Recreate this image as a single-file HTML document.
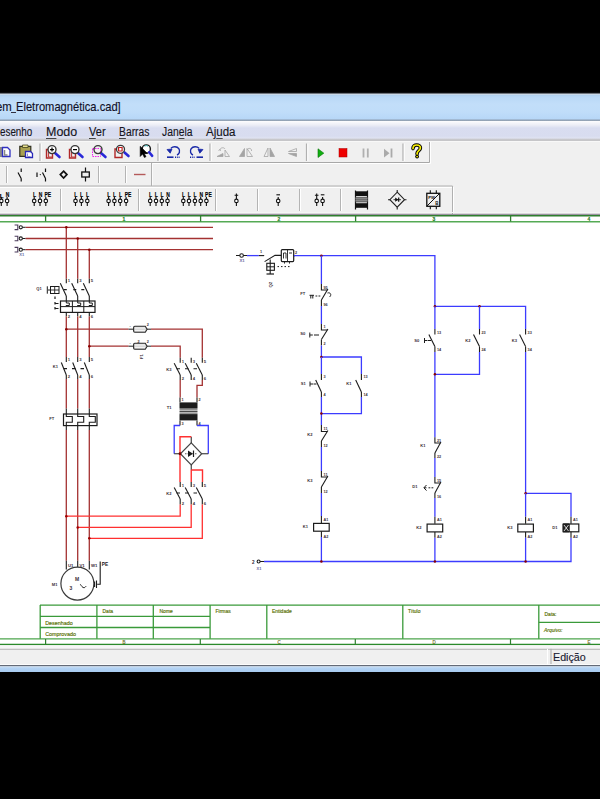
<!DOCTYPE html>
<html><head><meta charset="utf-8">
<style>
*{margin:0;padding:0;box-sizing:border-box}
html,body{width:600px;height:799px;overflow:hidden;background:#000;font-family:"Liberation Sans",sans-serif}
.a{position:absolute}
#title{left:0;top:92px;width:600px;height:29px;background:linear-gradient(#000 0,#1a1c20 1px,#70767e 1.5px,#c8d8e8 2.5px,#b2d2f0 3.5px,#b9d8f6 5px,#c2def9 12px,#c0ddf9 20px,#b7d7f7 27px,#8d9db0 28px,#9aaabb 29px)}
#title span{position:absolute;left:-1px;top:100px;font-size:11.6px;color:#202030;white-space:nowrap}
#menu{left:0;top:121px;width:600px;height:20px;background:linear-gradient(#fdfdfe 0,#f4f5fa 2px,#eceef6 4px,#d9ddf0 7px,#d8dcef 15px,#dfe2f1 17px,#c8c8cc 18.5px,#c6c6c9 19.5px,#f6f6f6 20px)}
.m{position:absolute;top:4px;transform-origin:0 0;display:inline-block;font-size:12px;color:#141420;white-space:nowrap;-webkit-text-stroke:0.12px #141420}
.m u{text-decoration:underline;text-decoration-thickness:1px;text-underline-offset:1.5px;text-decoration-color:#444}
#tb{left:0;top:141px;width:600px;height:73px;background:#f0f0f0}
#canvas{left:0;top:214px;width:600px;height:432px;background:#fff}
#status{left:0;top:646px;width:600px;height:19px;background:#f0f0f0}
#band{left:0;top:666px;width:600px;height:6px;background:linear-gradient(#e8f1fa,#b4d3f3 30%,#a7caf0)}
svg{position:absolute;left:0;top:0}
.t{font-family:"Liberation Sans",sans-serif}
</style></head><body>
<div id="title" class="a"></div>
<div class="a" style="left:-3.7px;top:99.6px;font-size:12.6px;color:#101028;white-space:nowrap;transform:scaleX(0.9);transform-origin:0 0;-webkit-text-stroke:0.15px #101028">em</div><div class="a" style="left:10.8px;top:112px;width:5.2px;height:1.2px;background:#303040"></div><div class="a" style="left:16px;top:99.6px;font-size:12.6px;color:#101028;white-space:nowrap;transform:scaleX(0.885);transform-origin:0 0;-webkit-text-stroke:0.15px #101028">Eletromagnética.cad]</div>
<div id="menu" class="a">
<span class="m" style="left:0px;transform:scaleX(0.82)">esenho</span>
<span class="m" style="left:46px;transform:scaleX(1.04)"><u>M</u>odo</span>
<span class="m" style="left:89px;transform:scaleX(0.92)"><u>V</u>er</span>
<span class="m" style="left:119px;transform:scaleX(0.86)"><u>B</u>arras</span>
<span class="m" style="left:162px;transform:scaleX(0.86)">Jan<u>e</u>la</span>
<span class="m" style="left:206px;transform:scaleX(0.96)">Aj<u>u</u>da</span>
</div>
<div id="tb" class="a"></div>
<div id="canvas" class="a"></div>
<div id="status" class="a"></div>
<div id="band" class="a"></div>
<svg width="600" height="799" viewBox="0 0 600 799">
<!-- toolbar bands -->
<g fill="none" stroke-width="1">
<path d="M0 141.5H600" stroke="#f8f8f8"/>
<path d="M429.5 142V162.5H0" stroke="#a8a8a8"/>
<path d="M430.5 142V163.5H0" stroke="#fff"/>
<path d="M151.5 163V186" stroke="#b0b0b0"/>
<path d="M152.5 163V186" stroke="#fafafa"/>
<path d="M0 186H452.5V214" stroke="#b0b0b0"/>
<path d="M0 187.5H452" stroke="#fff"/>
<path d="M453.5 187V214" stroke="#fff"/>
<path d="M0 212.5H600" stroke="#f6f6f6"/>
<!-- separators -->
<path d="M40 143.5V161M158 143.5V161M210 143.5V161M306.5 143.5V161M403 143.5V161" stroke="#b0b0b0" stroke-width="1.2"/>
<path d="M41.3 143.5V161M159.3 143.5V161M211.3 143.5V161M307.8 143.5V161M404.3 143.5V161" stroke="#fff" stroke-width="0.9"/>
<path d="M6.5 166V183M98.5 166V183M125.5 166V183" stroke="#b4b4b4"/>
<path d="M7.5 166V183M99.5 166V183M126.5 166V183" stroke="#fff"/>
<path d="M60.5 189V211M138.5 189V211M215.5 189V211M257.5 189V211M299.5 189V211M340.5 189V211" stroke="#b4b4b4"/>
<path d="M61.5 189V211M139.5 189V211M216.5 189V211M258.5 189V211M300.5 189V211M341.5 189V211" stroke="#fff"/>
</g>

<!-- toolbar1 icons -->
<g id="tb1">
<path d="M-1 147h3v10h-3z" fill="#8a8a8a"/>
<path d="M2.5 147.5h5l2.5 2.5v6.5h-7.5z" fill="#fff" stroke="#3030c0" stroke-width="1.3"/>
<path d="M4.5 150v5h3" fill="none" stroke="#888" stroke-width="1.5"/>
<path d="M19.8 146.3h11v10h-11z" fill="#a8a050" stroke="#303020" stroke-width="1.2"/>
<path d="M22.5 145h5.5v2.5h-5.5z" fill="#e8e090" stroke="#404020" stroke-width="0.8"/>
<path d="M25.5 151.5h5l2 2v4h-7z" fill="#fff" stroke="#2828b8" stroke-width="1.3"/>
<path d="M27.5 153.5v3h3" fill="none" stroke="#8888cc" stroke-width="1"/>
</g>
<g id="zp">
<path d="M46.5 149.5h6v8.5h-6z" fill="none" stroke="#b02828" stroke-width="1.4"/>
<path d="M48.5 152v5h4" fill="none" stroke="#c04040" stroke-width="1.2"/>
<path d="M55 153l4.5 4" stroke="#2828d8" stroke-width="2.6" stroke-linecap="round"/>
<circle cx="52" cy="149.6" r="4" fill="#fff" stroke="#383838" stroke-width="1.4"/>
<path d="M50 149.6h4M52 147.6v4" stroke="#000" stroke-width="1.2"/>
</g>
<g transform="translate(23 0)">
<path d="M46.5 149.5h6v8.5h-6z" fill="none" stroke="#b02828" stroke-width="1.4"/>
<path d="M48.5 152v5h4" fill="none" stroke="#c04040" stroke-width="1.2"/>
<path d="M55 153l4.5 4" stroke="#2828d8" stroke-width="2.6" stroke-linecap="round"/>
<circle cx="52" cy="149.6" r="4" fill="#fff" stroke="#383838" stroke-width="1.4"/>
<path d="M50 149.6h4" stroke="#000" stroke-width="1.2"/>
</g>
<g>
<path d="M92.5 148.5h8v8h-8z" fill="none" stroke="#f020f0" stroke-width="1" stroke-dasharray="1.5 1"/>
<path d="M101 153l4.5 4" stroke="#2828d8" stroke-width="2.6" stroke-linecap="round"/>
<circle cx="98" cy="149.6" r="4" fill="none" stroke="#383838" stroke-width="1.4"/>
</g>
<g>
<path d="M115 149h7v8.5h-7z" fill="none" stroke="#b02828" stroke-width="1.4"/>
<path d="M124.5 152.5l4 3.5" stroke="#2828d8" stroke-width="2.6" stroke-linecap="round"/>
<circle cx="120.5" cy="149.3" r="4" fill="#fff" stroke="#383838" stroke-width="1.3"/>
<path d="M118.6 147.5h3.5v3.5h-3.5z" fill="none" stroke="#c02020" stroke-width="1.2"/>
</g>
<g>
<circle cx="146.3" cy="149" r="4.1" fill="#fff" stroke="#1a1a1a" stroke-width="1.4"/><path d="M144.5 146.2a3 3 0 0 1 3.5 0" stroke="#40c0c0" stroke-width="1" fill="none"/><path d="M140.2 146.3v10.2l2.4-2.4 1.8 3.4 1.6-0.8-1.8-3.3h3.2z" fill="#000" stroke="#000" stroke-width="0.6"/><path d="M149.2 152.3l3 3.6" stroke="#2828d8" stroke-width="2.5" stroke-linecap="round"/>
</g>
<g fill="none" stroke="#1a2aa8">
<path d="M171 148.2c2-2 6-2 7.8 0.5c1.6 2.5 0.5 5.3-1.8 6.3" stroke-width="1.4"/>
<path d="M167 149.5l5-0.5-1.8 4.2z" fill="#1a2aa8" stroke-width="0.8"/>
<path d="M167 157.2h6.5" stroke-width="1.6"/>
<path d="M175 157.2h5" stroke-width="1.4" stroke-dasharray="1 0.8"/>
<path d="M199 148.2c-2-2-6-2-7.8 0.5c-1.6 2.5-0.5 5.3 1.8 6.3" stroke-width="1.4"/>
<path d="M203 149.5l-5-0.5 1.8 4.2z" fill="#1a2aa8" stroke-width="0.8"/>
<path d="M196.5 157.2h6.5" stroke-width="1.6"/>
<path d="M190 157.2h5" stroke-width="1.4" stroke-dasharray="1 0.8"/>
</g>
<g fill="#a4a4a4" stroke="#a4a4a4" stroke-width="0.8">
<path d="M217 156.5l6-3v3z"/><path d="M225 150v6.5h4.5z" fill="none"/><path d="M220 150c0-2.5 4-3 5-1" fill="none"/><path d="M218.5 150.5l1.5-1 0.5 1.5" fill="none"/>
<path d="M239.5 156.5l5-8v8z"/><path d="M247 148.5v8h5.5z" fill="none"/><path d="M247 150c1-2.5 5-2 4.5 1" fill="none"/>
<path d="M264 156.5l4-8.5v8.5z" fill="none"/><path d="M270 148v8.5l4.5 0z"/>
<path d="M288.5 151.5l8-3v3z" fill="none"/><path d="M288.5 153.5l8 3v-3z"/>
</g>
<path d="M318 148.8v8.7l5.8-4.35z" fill="#10b010" stroke="#087008" stroke-width="0.6"/>
<rect x="339" y="148.5" width="8" height="8.5" fill="#ee0000" stroke="#a00" stroke-width="0.5"/>
<path d="M363.5 148.5v9M367.8 148.5v9" stroke="#b0b0b0" stroke-width="1.8"/>
<path d="M384 148.8v8.7l5.5-4.35z" fill="#aaa"/><path d="M391.5 148.5v9" stroke="#aaa" stroke-width="1.8"/>
<path d="M413 148.6c0-2.4 1.8-3.6 3.7-3.6c2.1 0 3.7 1.3 3.7 3.1c0 2.4-3.3 2.6-3.3 5.2v0.6" fill="none" stroke="#000" stroke-width="3.6" stroke-linecap="round"/><circle cx="417.1" cy="156.6" r="1.9" fill="#000"/><path d="M413 148.6c0-2.4 1.8-3.6 3.7-3.6c2.1 0 3.7 1.3 3.7 3.1c0 2.4-3.3 2.6-3.3 5.2v0.6" fill="none" stroke="#f4ec00" stroke-width="1.7" stroke-linecap="round"/><circle cx="417.1" cy="156.6" r="0.9" fill="#f4ec00"/>
<!-- toolbar2 icons -->
<g fill="none" stroke="#111" stroke-width="1.2">
<path d="M21.2 168.5v3.5M18 172.5l3.2 6M21.2 178.5v3"/>
<path d="M45.5 168.5v3.5M42.5 172.5l3 6M45.5 178.5v3M37 172.5v4.5"/><circle cx="40.3" cy="174.6" r="0.6" fill="#111" stroke="none"/>
<path d="M63.6 171.2l3.3 3.4-3.3 3.4-3.3-3.4z" stroke-width="1.7"/>
<path d="M85.5 167.5v4.5M85.5 177v4.5"/><rect x="81.8" y="172" width="7.5" height="5" stroke-width="1.3"/>
</g>
<path d="M134 174.5h11.5" stroke="#b45a5a" stroke-width="1.4"/>
<!-- toolbar3 icons -->
<g id="tb3"><circle cx="1.3" cy="200.9" r="1.75" fill="#fff" stroke="#111" stroke-width="1.1"/><path d="M1.3 202.7v3.2M1.3 197v2.1" stroke="#111" stroke-width="1.1"/><text x="-0.2" y="197.6" font-size="6" font-weight="bold" fill="#000" stroke="#000" stroke-width="0.25" class="t">L</text><circle cx="7.1" cy="200.9" r="1.75" fill="#fff" stroke="#111" stroke-width="1.1"/><path d="M7.1 202.7v3.2M7.1 197v2.1" stroke="#111" stroke-width="1.1"/><text transform="translate(5.8 197.4) scale(0.78 1)" font-size="6.4" font-weight="bold" fill="#000" stroke="#000" stroke-width="0.15" class="t">N</text><circle cx="34.2" cy="200.9" r="1.75" fill="#fff" stroke="#111" stroke-width="1.1"/><path d="M34.2 202.7v3.2M34.2 197v2.1" stroke="#111" stroke-width="1.1"/><text transform="translate(32.9 197.4) scale(0.78 1)" font-size="6.4" font-weight="bold" fill="#000" stroke="#000" stroke-width="0.15" class="t">L</text><circle cx="40" cy="200.9" r="1.75" fill="#fff" stroke="#111" stroke-width="1.1"/><path d="M40 202.7v3.2M40 197v2.1" stroke="#111" stroke-width="1.1"/><text transform="translate(38.7 197.4) scale(0.78 1)" font-size="6.4" font-weight="bold" fill="#000" stroke="#000" stroke-width="0.15" class="t">N</text><circle cx="45.8" cy="200.9" r="1.75" fill="#fff" stroke="#111" stroke-width="1.1"/><path d="M45.8 202.7v3.2M45.8 197v2.1" stroke="#111" stroke-width="1.1"/><text transform="translate(44.5 197.4) scale(0.78 1)" font-size="6.4" font-weight="bold" fill="#000" stroke="#000" stroke-width="0.15" class="t">PE</text><circle cx="75.5" cy="200.9" r="1.75" fill="#fff" stroke="#111" stroke-width="1.1"/><path d="M75.5 202.7v3.2M75.5 197v2.1" stroke="#111" stroke-width="1.1"/><text transform="translate(74.2 197.4) scale(0.78 1)" font-size="6.4" font-weight="bold" fill="#000" stroke="#000" stroke-width="0.15" class="t">L</text><circle cx="81.4" cy="200.9" r="1.75" fill="#fff" stroke="#111" stroke-width="1.1"/><path d="M81.4 202.7v3.2M81.4 197v2.1" stroke="#111" stroke-width="1.1"/><text transform="translate(80.1 197.4) scale(0.78 1)" font-size="6.4" font-weight="bold" fill="#000" stroke="#000" stroke-width="0.15" class="t">L</text><circle cx="87.3" cy="200.9" r="1.75" fill="#fff" stroke="#111" stroke-width="1.1"/><path d="M87.3 202.7v3.2M87.3 197v2.1" stroke="#111" stroke-width="1.1"/><text transform="translate(86.0 197.4) scale(0.78 1)" font-size="6.4" font-weight="bold" fill="#000" stroke="#000" stroke-width="0.15" class="t">L</text><circle cx="108.6" cy="200.9" r="1.75" fill="#fff" stroke="#111" stroke-width="1.1"/><path d="M108.6 202.7v3.2M108.6 197v2.1" stroke="#111" stroke-width="1.1"/><text transform="translate(107.3 197.4) scale(0.78 1)" font-size="6.4" font-weight="bold" fill="#000" stroke="#000" stroke-width="0.15" class="t">L</text><circle cx="114.4" cy="200.9" r="1.75" fill="#fff" stroke="#111" stroke-width="1.1"/><path d="M114.4 202.7v3.2M114.4 197v2.1" stroke="#111" stroke-width="1.1"/><text transform="translate(113.1 197.4) scale(0.78 1)" font-size="6.4" font-weight="bold" fill="#000" stroke="#000" stroke-width="0.15" class="t">L</text><circle cx="120.2" cy="200.9" r="1.75" fill="#fff" stroke="#111" stroke-width="1.1"/><path d="M120.2 202.7v3.2M120.2 197v2.1" stroke="#111" stroke-width="1.1"/><text transform="translate(118.9 197.4) scale(0.78 1)" font-size="6.4" font-weight="bold" fill="#000" stroke="#000" stroke-width="0.15" class="t">L</text><circle cx="126.1" cy="200.9" r="1.75" fill="#fff" stroke="#111" stroke-width="1.1"/><path d="M126.1 202.7v3.2M126.1 197v2.1" stroke="#111" stroke-width="1.1"/><text transform="translate(124.8 197.4) scale(0.78 1)" font-size="6.4" font-weight="bold" fill="#000" stroke="#000" stroke-width="0.15" class="t">PE</text><circle cx="150.2" cy="200.9" r="1.75" fill="#fff" stroke="#111" stroke-width="1.1"/><path d="M150.2 202.7v3.2M150.2 197v2.1" stroke="#111" stroke-width="1.1"/><text transform="translate(148.9 197.4) scale(0.78 1)" font-size="6.4" font-weight="bold" fill="#000" stroke="#000" stroke-width="0.15" class="t">L</text><circle cx="156" cy="200.9" r="1.75" fill="#fff" stroke="#111" stroke-width="1.1"/><path d="M156 202.7v3.2M156 197v2.1" stroke="#111" stroke-width="1.1"/><text transform="translate(154.7 197.4) scale(0.78 1)" font-size="6.4" font-weight="bold" fill="#000" stroke="#000" stroke-width="0.15" class="t">L</text><circle cx="161.8" cy="200.9" r="1.75" fill="#fff" stroke="#111" stroke-width="1.1"/><path d="M161.8 202.7v3.2M161.8 197v2.1" stroke="#111" stroke-width="1.1"/><text transform="translate(160.5 197.4) scale(0.78 1)" font-size="6.4" font-weight="bold" fill="#000" stroke="#000" stroke-width="0.15" class="t">L</text><circle cx="167.5" cy="200.9" r="1.75" fill="#fff" stroke="#111" stroke-width="1.1"/><path d="M167.5 202.7v3.2M167.5 197v2.1" stroke="#111" stroke-width="1.1"/><text transform="translate(166.2 197.4) scale(0.78 1)" font-size="6.4" font-weight="bold" fill="#000" stroke="#000" stroke-width="0.15" class="t">N</text><circle cx="183.3" cy="200.9" r="1.75" fill="#fff" stroke="#111" stroke-width="1.1"/><path d="M183.3 202.7v3.2M183.3 197v2.1" stroke="#111" stroke-width="1.1"/><text transform="translate(182.0 197.4) scale(0.78 1)" font-size="6.4" font-weight="bold" fill="#000" stroke="#000" stroke-width="0.15" class="t">L</text><circle cx="189" cy="200.9" r="1.75" fill="#fff" stroke="#111" stroke-width="1.1"/><path d="M189 202.7v3.2M189 197v2.1" stroke="#111" stroke-width="1.1"/><text transform="translate(187.7 197.4) scale(0.78 1)" font-size="6.4" font-weight="bold" fill="#000" stroke="#000" stroke-width="0.15" class="t">L</text><circle cx="194.9" cy="200.9" r="1.75" fill="#fff" stroke="#111" stroke-width="1.1"/><path d="M194.9 202.7v3.2M194.9 197v2.1" stroke="#111" stroke-width="1.1"/><text transform="translate(193.6 197.4) scale(0.78 1)" font-size="6.4" font-weight="bold" fill="#000" stroke="#000" stroke-width="0.15" class="t">L</text><circle cx="200.7" cy="200.9" r="1.75" fill="#fff" stroke="#111" stroke-width="1.1"/><path d="M200.7 202.7v3.2M200.7 197v2.1" stroke="#111" stroke-width="1.1"/><text transform="translate(199.4 197.4) scale(0.78 1)" font-size="6.4" font-weight="bold" fill="#000" stroke="#000" stroke-width="0.15" class="t">N</text><circle cx="206.4" cy="200.9" r="1.75" fill="#fff" stroke="#111" stroke-width="1.1"/><path d="M206.4 202.7v3.2M206.4 197v2.1" stroke="#111" stroke-width="1.1"/><text transform="translate(205.1 197.4) scale(0.78 1)" font-size="6.4" font-weight="bold" fill="#000" stroke="#000" stroke-width="0.15" class="t">PE</text><circle cx="236.4" cy="200.9" r="1.75" fill="#fff" stroke="#111" stroke-width="1.1"/><path d="M236.4 202.7v3.2M236.4 197v2.1" stroke="#111" stroke-width="1.1"/><path d="M234.6 195.2h3.6M236.4 193.4v3.6" stroke="#111" stroke-width="1.1"/><circle cx="278.2" cy="200.9" r="1.75" fill="#fff" stroke="#111" stroke-width="1.1"/><path d="M278.2 202.7v3.2M278.2 197v2.1" stroke="#111" stroke-width="1.1"/><path d="M276.4 194.8h3.6" stroke="#111" stroke-width="1.1"/><circle cx="316.7" cy="200.9" r="1.75" fill="#fff" stroke="#111" stroke-width="1.1"/><path d="M316.7 202.7v3.2M316.7 197v2.1" stroke="#111" stroke-width="1.1"/><path d="M314.9 195.2h3.6M316.7 193.4v3.6" stroke="#111" stroke-width="1.1"/><circle cx="322.6" cy="200.9" r="1.75" fill="#fff" stroke="#111" stroke-width="1.1"/><path d="M322.6 202.7v3.2M322.6 197v2.1" stroke="#111" stroke-width="1.1"/><path d="M320.8 194.8h3.6" stroke="#111" stroke-width="1.1"/><g stroke="#111" fill="none"><path d="M355.5 190.5v19M367.5 190.5v19" stroke-width="1.2"/></g><rect x="355.5" y="191.3" width="12" height="4.7" fill="#111"/><rect x="355.5" y="196.8" width="12" height="5.6" fill="#6a6a6a"/><path d="M355.5 198.6h12M355.5 200.6h12" stroke="#9a9a9a" stroke-width="0.7"/><rect x="355.5" y="203.2" width="12" height="4.6" fill="#111"/><g fill="none" stroke="#222" stroke-width="1.1"><path d="M397.2 192.2l7.3 7.5-7.3 7.5-7.3-7.5z"/><path d="M388 199.7h2M404.5 199.7h2M397.2 190v2.2M397.2 207.2v2.2"/></g><path d="M393.5 199.7h7.5" stroke="#111" stroke-width="0.8"/><path d="M395.2 197.6v4.2l3.2-2.1z" fill="#111"/><path d="M398.7 197.6v4.2" stroke="#111" stroke-width="1.2"/><g fill="none" stroke="#111" stroke-width="1.3"><rect x="426.8" y="193.3" width="13" height="13"/><path d="M427 206l12.6-12.6" stroke-width="1"/><path d="M430.3 190.3v3M436.3 190.3v3M430.3 206.3v3M436.3 206.3v3" stroke-width="1.1"/></g><text x="428.3" y="198.6" font-size="4.2" font-weight="bold" fill="#111" class="t">PW</text><text x="435.3" y="205" font-size="4.5" font-weight="bold" fill="#111" class="t">B</text></g>
<g id="frame">
<rect x="0" y="213.8" width="600" height="1" fill="#807888"/>
<path d="M0 215.8H600" fill="none" stroke="#2f7f2f" stroke-width="1.5"/>
<path d="M0 221.7H600" fill="none" stroke="#55aa55" stroke-width="1.5"/>
<path d="M45.6 216V221.5" fill="none" stroke="#2f7f2f" stroke-width="1.3"/>
<path d="M200.6 216V221.5" fill="none" stroke="#2f7f2f" stroke-width="1.3"/>
<path d="M355.6 216V221.5" fill="none" stroke="#2f7f2f" stroke-width="1.3"/>
<path d="M510.6 216V221.5" fill="none" stroke="#2f7f2f" stroke-width="1.3"/>
<text x="122.6" y="220.6" font-size="5" fill="#2a7a20" stroke="#2a7a20" stroke-width="0.15" class="t" font-weight="bold">1</text>
<text x="277.6" y="220.6" font-size="5" fill="#2a7a20" stroke="#2a7a20" stroke-width="0.15" class="t" font-weight="bold">2</text>
<text x="432.6" y="220.6" font-size="5" fill="#2a7a20" stroke="#2a7a20" stroke-width="0.15" class="t" font-weight="bold">3</text>
<text x="587.6" y="220.6" font-size="5" fill="#2a7a20" stroke="#2a7a20" stroke-width="0.15" class="t" font-weight="bold">4</text>
<path d="M40.2 605V639" fill="none" stroke="#3a9a3a" stroke-width="1.3"/>
<path d="M96.9 605V639" fill="none" stroke="#3a9a3a" stroke-width="1.3"/>
<path d="M153.3 605V639" fill="none" stroke="#3a9a3a" stroke-width="1.3"/>
<path d="M210.1 605V639" fill="none" stroke="#3a9a3a" stroke-width="1.3"/>
<path d="M266.8 605V639" fill="none" stroke="#3a9a3a" stroke-width="1.3"/>
<path d="M402.8 605V639" fill="none" stroke="#3a9a3a" stroke-width="1.3"/>
<path d="M538.8 605V639" fill="none" stroke="#3a9a3a" stroke-width="1.3"/>
<path d="M40 605.1H600" fill="none" stroke="#3a9a3a" stroke-width="1.3"/>
<path d="M40 616.3H210" fill="none" stroke="#3a9a3a" stroke-width="1.3"/>
<path d="M40 627.5H210" fill="none" stroke="#3a9a3a" stroke-width="1.3"/>
<path d="M538.8 622.4H600" fill="none" stroke="#3a9a3a" stroke-width="1.3"/>
<path d="M0 638.9H600" fill="none" stroke="#4da54d" stroke-width="1.4"/>
<path d="M0 644.5H600" fill="none" stroke="#2b8a2b" stroke-width="1.4"/>
<path d="M45.6 639V644.5" fill="none" stroke="#2f7f2f" stroke-width="1.2"/>
<path d="M200.3 639V644.5" fill="none" stroke="#2f7f2f" stroke-width="1.2"/>
<path d="M355.3 639V644.5" fill="none" stroke="#2f7f2f" stroke-width="1.2"/>
<path d="M510.5 639V644.5" fill="none" stroke="#2f7f2f" stroke-width="1.2"/>
<text x="122.5" y="643.5" font-size="4.5" fill="#707020" stroke="#707020" stroke-width="0.15" class="t" >B</text>
<text x="277.5" y="643.5" font-size="4.5" fill="#707020" stroke="#707020" stroke-width="0.15" class="t" >C</text>
<text x="432.5" y="643.5" font-size="4.5" fill="#707020" stroke="#707020" stroke-width="0.15" class="t" >D</text>
<text x="587.5" y="643.5" font-size="4.5" fill="#707020" stroke="#707020" stroke-width="0.15" class="t" >E</text>
<text x="102.5" y="613" font-size="5" fill="#587000" stroke="#587000" stroke-width="0.15" class="t" >Data</text>
<text x="159.5" y="613" font-size="5" fill="#587000" stroke="#587000" stroke-width="0.15" class="t" >Nome</text>
<text x="215.5" y="612.5" font-size="5" fill="#587000" stroke="#587000" stroke-width="0.15" class="t" >Firmas</text>
<text x="272" y="612.5" font-size="5" fill="#587000" stroke="#587000" stroke-width="0.15" class="t" >Entidade</text>
<text x="408" y="612.5" font-size="5" fill="#587000" stroke="#587000" stroke-width="0.15" class="t" >Título</text>
<text x="544.5" y="615.5" font-size="5" fill="#587000" stroke="#587000" stroke-width="0.15" class="t" >Data:</text>
<text x="544" y="632" font-size="5" fill="#587000" stroke="#587000" stroke-width="0.15" class="t" font-style="italic">Arquivo:</text>
<text x="45.2" y="624.5" font-size="5.4" fill="#587000" stroke="#587000" stroke-width="0.15" class="t" >Desenhado</text>
<text x="45.2" y="636" font-size="5.4" fill="#587000" stroke="#587000" stroke-width="0.15" class="t" >Comprovado</text>
<rect x="0" y="645.2" width="600" height="3.5" fill="#f6f6f6"/>
<rect x="0" y="648.8" width="600" height="1" fill="#a9a9a9"/>
<rect x="0" y="649.8" width="600" height="14.4" fill="#f0f0f0"/>
<rect x="547" y="648.8" width="1" height="15.5" fill="#fff"/>
<rect x="550.5" y="648.8" width="1" height="15.5" fill="#a9a9a9"/>
<rect x="0" y="664.2" width="600" height="1" fill="#ffffff"/>
<rect x="0" y="665.2" width="600" height="1" fill="#6f7888"/>

</g>
<g id="schem">
<path d="M25.5 227.3 L213 227.3" fill="none" stroke="#a43232" stroke-width="1.3"/>
<circle cx="20.8" cy="227.3" r="1.6" fill="#fff" stroke="#1c1c1c" stroke-width="1.1"/>
<path d="M22.6 227.3 L25.5 227.3" fill="none" stroke="#1c1c1c" stroke-width="1"/>
<path d="M14.6 225.0h3.2v4.6h-3.2" fill="none" stroke="#4a3a5a" stroke-width="1.1"/>
<path d="M25.5 238.5 L213 238.5" fill="none" stroke="#a43232" stroke-width="1.3"/>
<circle cx="20.8" cy="238.5" r="1.6" fill="#fff" stroke="#1c1c1c" stroke-width="1.1"/>
<path d="M22.6 238.5 L25.5 238.5" fill="none" stroke="#1c1c1c" stroke-width="1"/>
<path d="M14.6 236.2h3.2v4.6h-3.2" fill="none" stroke="#4a3a5a" stroke-width="1.1"/>
<path d="M25.5 249.7 L213 249.7" fill="none" stroke="#a43232" stroke-width="1.3"/>
<circle cx="20.8" cy="249.7" r="1.6" fill="#fff" stroke="#1c1c1c" stroke-width="1.1"/>
<path d="M22.6 249.7 L25.5 249.7" fill="none" stroke="#1c1c1c" stroke-width="1"/>
<path d="M14.6 247.39999999999998h3.2v4.6h-3.2" fill="none" stroke="#4a3a5a" stroke-width="1.1"/>
<text x="19.3" y="256.4" font-size="4.1" fill="#6a6aa0" font-weight="bold" text-anchor="start" class="t" >X1</text>
<path d="M66.3 227.3 L66.3 278.7" fill="none" stroke="#a43232" stroke-width="1.3"/>
<circle cx="66.3" cy="227.3" r="1.25" fill="#8a0000"/>
<path d="M77.7 238.5 L77.7 278.7" fill="none" stroke="#a43232" stroke-width="1.3"/>
<circle cx="77.7" cy="238.5" r="1.25" fill="#8a0000"/>
<path d="M89.3 249.7 L89.3 278.7" fill="none" stroke="#a43232" stroke-width="1.3"/>
<circle cx="89.3" cy="249.7" r="1.25" fill="#8a0000"/>
<path d="M66.3 278.7 L66.3 283.3" fill="none" stroke="#1c1c1c" stroke-width="1.1"/>
<path d="M60.3 283.3 L66.3 296" fill="none" stroke="#1c1c1c" stroke-width="1.1"/>
<path d="M66.3 296 L66.3 301" fill="none" stroke="#1c1c1c" stroke-width="1.1"/>
<text x="67.8" y="282" font-size="4.2" fill="#3c3038" font-weight="bold" text-anchor="start" class="t" >1</text>
<path d="M66.3 312.4 L66.3 316.5" fill="none" stroke="#1c1c1c" stroke-width="1.1"/>
<text x="67.8" y="317.5" font-size="4.2" fill="#3c3038" font-weight="bold" text-anchor="start" class="t" >2</text>
<path d="M77.7 278.7 L77.7 283.3" fill="none" stroke="#1c1c1c" stroke-width="1.1"/>
<path d="M71.7 283.3 L77.7 296" fill="none" stroke="#1c1c1c" stroke-width="1.1"/>
<path d="M77.7 296 L77.7 301" fill="none" stroke="#1c1c1c" stroke-width="1.1"/>
<text x="79.2" y="282" font-size="4.2" fill="#3c3038" font-weight="bold" text-anchor="start" class="t" >3</text>
<path d="M77.7 312.4 L77.7 316.5" fill="none" stroke="#1c1c1c" stroke-width="1.1"/>
<text x="79.2" y="317.5" font-size="4.2" fill="#3c3038" font-weight="bold" text-anchor="start" class="t" >4</text>
<path d="M89.3 278.7 L89.3 283.3" fill="none" stroke="#1c1c1c" stroke-width="1.1"/>
<path d="M83.3 283.3 L89.3 296" fill="none" stroke="#1c1c1c" stroke-width="1.1"/>
<path d="M89.3 296 L89.3 301" fill="none" stroke="#1c1c1c" stroke-width="1.1"/>
<text x="90.8" y="282" font-size="4.2" fill="#3c3038" font-weight="bold" text-anchor="start" class="t" >5</text>
<path d="M89.3 312.4 L89.3 316.5" fill="none" stroke="#1c1c1c" stroke-width="1.1"/>
<text x="90.8" y="317.5" font-size="4.2" fill="#3c3038" font-weight="bold" text-anchor="start" class="t" >6</text>
<rect x="60.5" y="301" width="34.5" height="11.4" fill="none" stroke="#1c1c1c" stroke-width="1.2"/>
<path d="M72.4 301 L72.4 312.4" fill="none" stroke="#1c1c1c" stroke-width="1"/>
<path d="M83.8 301 L83.8 312.4" fill="none" stroke="#1c1c1c" stroke-width="1"/>
<path d="M60.5 306.6 L95 306.6" fill="none" stroke="#1c1c1c" stroke-width="1"/>
<path d="M66.3 301V303H69.3V305.5H65.8" fill="none" stroke="#1c1c1c" stroke-width="1"/>
<path d="M77.7 301V303H80.7V305.5H77.2" fill="none" stroke="#1c1c1c" stroke-width="1"/>
<path d="M89.3 301V303H92.3V305.5H88.8" fill="none" stroke="#1c1c1c" stroke-width="1"/>
<path d="M47.3 286.3v7.4M48 290h2.5" fill="none" stroke="#1c1c1c" stroke-width="1"/>
<rect x="50.5" y="286.5" width="8.5" height="7" fill="none" stroke="#1c1c1c" stroke-width="1"/>
<path d="M54.7 286.5v7M50.5 290h8.5" fill="none" stroke="#1c1c1c" stroke-width="0.9"/>
<path d="M55 296.5v2.5M55 302v2.5M55 307v2.5M55.5 303.5h3M55.5 308.5h3" fill="none" stroke="#1c1c1c" stroke-width="1.2"/>
<text x="36.3" y="289.9" font-size="4.1" fill="#3c3038" font-weight="bold" text-anchor="start" class="t" >Q1</text>
<path d="M63.8 289.6H85" fill="none" stroke="#1c1c1c" stroke-width="1.1" stroke-dasharray="3 6.5 3 5"/>
<path d="M66.3 316.5 L66.3 357" fill="none" stroke="#a43232" stroke-width="1.3"/>
<path d="M77.7 316.5 L77.7 357" fill="none" stroke="#a43232" stroke-width="1.3"/>
<path d="M89.3 316.5 L89.3 357" fill="none" stroke="#a43232" stroke-width="1.3"/>
<path d="M66.3 357 L66.3 362" fill="none" stroke="#1c1c1c" stroke-width="1.1"/>
<path d="M61.3 362.5 L66.3 375" fill="none" stroke="#1c1c1c" stroke-width="1.1"/>
<path d="M66.3 375 L66.3 379" fill="none" stroke="#1c1c1c" stroke-width="1.1"/>
<text x="67.8" y="361" font-size="4.2" fill="#3c3038" font-weight="bold" text-anchor="start" class="t" >1</text>
<text x="67.8" y="378" font-size="4.2" fill="#3c3038" font-weight="bold" text-anchor="start" class="t" >2</text>
<path d="M77.7 357 L77.7 362" fill="none" stroke="#1c1c1c" stroke-width="1.1"/>
<path d="M72.7 362.5 L77.7 375" fill="none" stroke="#1c1c1c" stroke-width="1.1"/>
<path d="M77.7 375 L77.7 379" fill="none" stroke="#1c1c1c" stroke-width="1.1"/>
<text x="79.2" y="361" font-size="4.2" fill="#3c3038" font-weight="bold" text-anchor="start" class="t" >3</text>
<text x="79.2" y="378" font-size="4.2" fill="#3c3038" font-weight="bold" text-anchor="start" class="t" >4</text>
<path d="M89.3 357 L89.3 362" fill="none" stroke="#1c1c1c" stroke-width="1.1"/>
<path d="M84.3 362.5 L89.3 375" fill="none" stroke="#1c1c1c" stroke-width="1.1"/>
<path d="M89.3 375 L89.3 379" fill="none" stroke="#1c1c1c" stroke-width="1.1"/>
<text x="90.8" y="361" font-size="4.2" fill="#3c3038" font-weight="bold" text-anchor="start" class="t" >5</text>
<text x="90.8" y="378" font-size="4.2" fill="#3c3038" font-weight="bold" text-anchor="start" class="t" >6</text>
<text x="52.8" y="368.4" font-size="4.1" fill="#3c3038" font-weight="bold" text-anchor="start" class="t" >K1</text>
<path d="M63.5 368.6H85.5" fill="none" stroke="#1c1c1c" stroke-width="1.1" stroke-dasharray="3.5 5 3.5 5"/>
<path d="M66.3 379 L66.3 408.5" fill="none" stroke="#a43232" stroke-width="1.3"/>
<path d="M77.7 379 L77.7 408.5" fill="none" stroke="#a43232" stroke-width="1.3"/>
<path d="M89.3 379 L89.3 408.5" fill="none" stroke="#a43232" stroke-width="1.3"/>
<path d="M66.3 408.5 L66.3 414" fill="none" stroke="#1c1c1c" stroke-width="1.1"/>
<path d="M66.3 425.6 L66.3 430" fill="none" stroke="#1c1c1c" stroke-width="1.1"/>
<path d="M66.3 414V416.5H72.3V422.2H66.3V425.6" fill="none" stroke="#1c1c1c" stroke-width="1.1"/>
<path d="M77.7 408.5 L77.7 414" fill="none" stroke="#1c1c1c" stroke-width="1.1"/>
<path d="M77.7 425.6 L77.7 430" fill="none" stroke="#1c1c1c" stroke-width="1.1"/>
<path d="M77.7 414V416.5H83.7V422.2H77.7V425.6" fill="none" stroke="#1c1c1c" stroke-width="1.1"/>
<path d="M89.3 408.5 L89.3 414" fill="none" stroke="#1c1c1c" stroke-width="1.1"/>
<path d="M89.3 425.6 L89.3 430" fill="none" stroke="#1c1c1c" stroke-width="1.1"/>
<path d="M89.3 414V416.5H95.3V422.2H89.3V425.6" fill="none" stroke="#1c1c1c" stroke-width="1.1"/>
<rect x="63.5" y="414" width="33.5" height="11.6" fill="none" stroke="#1c1c1c" stroke-width="1.2"/>
<text x="49.3" y="419.9" font-size="4.1" fill="#3c3038" font-weight="bold" text-anchor="start" class="t" >FT</text>
<path d="M66.3 430 L66.3 560.8" fill="none" stroke="#a43232" stroke-width="1.3"/>
<path d="M77.7 430 L77.7 560.8" fill="none" stroke="#a43232" stroke-width="1.3"/>
<path d="M89.3 430 L89.3 560.8" fill="none" stroke="#a43232" stroke-width="1.3"/>
<path d="M66.3 560.8 L66.3 569.6" fill="none" stroke="#1c1c1c" stroke-width="1.1"/>
<path d="M77.7 560.8 L77.7 567" fill="none" stroke="#1c1c1c" stroke-width="1.1"/>
<path d="M89.3 560.8 L89.3 569.6" fill="none" stroke="#1c1c1c" stroke-width="1.1"/>
<circle cx="77.4" cy="583.6" r="16.5" fill="none" stroke="#3a3a3a" stroke-width="1.2"/>
<path d="M100.2 561.4v22.8h-3M96.5 580.5v7.5M94.6 581.5v5.5" fill="none" stroke="#1c1c1c" stroke-width="1.1"/>
<text x="68" y="567" font-size="4.3" fill="#3c3038" font-weight="bold" text-anchor="start" class="t" >U1</text>
<text x="79.5" y="567" font-size="4.3" fill="#3c3038" font-weight="bold" text-anchor="start" class="t" >V1</text>
<text x="91" y="567" font-size="4.3" fill="#3c3038" font-weight="bold" text-anchor="start" class="t" >W1</text>
<text x="101.8" y="565.5" font-size="4.8" fill="#222" font-weight="bold" text-anchor="start" class="t" font-weight="bold">PE</text>
<text x="51.8" y="585.9" font-size="4.1" fill="#3c3038" font-weight="bold" text-anchor="start" class="t" >M1</text>
<text x="75" y="580.5" font-size="5" fill="#3c3038" font-weight="bold" text-anchor="start" class="t" >M</text>
<text x="69.5" y="589.5" font-size="5" fill="#3c3038" font-weight="bold" text-anchor="start" class="t" >3</text>
<path d="M80.3 584.3c1.2 1.6 2.2 3.4 3.6 3.4c1 0 1.6-0.8 2.2-1.6" fill="none" stroke="#1c1c1c" stroke-width="1"/>
<path d="M66.3 329.2 L128.5 329.2" fill="none" stroke="#a43232" stroke-width="1.3"/>
<path d="M151 329.2 L202.3 329.2 L202.3 357.8" fill="none" stroke="#a43232" stroke-width="1.3"/>
<path d="M89.3 346.2 L128.5 346.2" fill="none" stroke="#a43232" stroke-width="1.3"/>
<path d="M151 346.2 L180.2 346.2 L180.2 357.8" fill="none" stroke="#a43232" stroke-width="1.3"/>
<circle cx="66.3" cy="329.2" r="1.25" fill="#8a0000"/>
<circle cx="89.3" cy="346.2" r="1.25" fill="#8a0000"/>
<path d="M128.5 329.2 L133.8 329.2" fill="none" stroke="#333" stroke-width="1.1"/>
<path d="M147 329.2 L151 329.2" fill="none" stroke="#333" stroke-width="1.1"/>
<path d="M134.8 326.2h10.5l1.8 3-1.8 3h-10.5a1.2 1.2 0 0 1-1.2-1.2v-3.6a1.2 1.2 0 0 1 1.2-1.2z" fill="#d8d8d8" stroke="#2a2a2a" stroke-width="1.1"/>
<path d="M135 328.0h10M135 330.4h10" stroke="#fff" stroke-width="0.8"/>
<text x="129.5" y="326.59999999999997" font-size="4" fill="#3c3038" font-weight="bold" text-anchor="start" class="t" >-</text>
<text x="146.8" y="326.4" font-size="3.8" fill="#3c3038" font-weight="bold" text-anchor="start" class="t" >2</text>
<path d="M128.5 346.2 L133.8 346.2" fill="none" stroke="#333" stroke-width="1.1"/>
<path d="M147 346.2 L151 346.2" fill="none" stroke="#333" stroke-width="1.1"/>
<path d="M134.8 343.2h10.5l1.8 3-1.8 3h-10.5a1.2 1.2 0 0 1-1.2-1.2v-3.6a1.2 1.2 0 0 1 1.2-1.2z" fill="#d8d8d8" stroke="#2a2a2a" stroke-width="1.1"/>
<path d="M135 345.0h10M135 347.4h10" stroke="#fff" stroke-width="0.8"/>
<text x="129.5" y="343.59999999999997" font-size="4" fill="#3c3038" font-weight="bold" text-anchor="start" class="t" >-</text>
<text x="146.8" y="343.4" font-size="3.8" fill="#3c3038" font-weight="bold" text-anchor="start" class="t" >2</text>
<text x="137.5" y="343.3" font-size="3.8" fill="#3c3038" font-weight="bold" text-anchor="start" class="t" >2</text>
<text x="137" y="359" font-size="4.2" fill="#3c3038" font-weight="bold" text-anchor="start" class="t" transform="rotate(-90 140 356)">F1</text>
<path d="M180.2 357.8 L180.2 362.8" fill="none" stroke="#1c1c1c" stroke-width="1.1"/>
<path d="M174.2 363.3 L180.2 375" fill="none" stroke="#1c1c1c" stroke-width="1.1"/>
<path d="M180.2 375 L180.2 380" fill="none" stroke="#1c1c1c" stroke-width="1.1"/>
<text x="181.7" y="362.5" font-size="4.2" fill="#3c3038" font-weight="bold" text-anchor="start" class="t" >1</text>
<text x="181.7" y="379.5" font-size="4.2" fill="#3c3038" font-weight="bold" text-anchor="start" class="t" >2</text>
<path d="M191.2 357.8 L191.2 362.8" fill="none" stroke="#1c1c1c" stroke-width="1.1"/>
<path d="M185.2 363.3 L191.2 375" fill="none" stroke="#1c1c1c" stroke-width="1.1"/>
<path d="M191.2 375 L191.2 380" fill="none" stroke="#1c1c1c" stroke-width="1.1"/>
<text x="192.7" y="362.5" font-size="4.2" fill="#3c3038" font-weight="bold" text-anchor="start" class="t" >3</text>
<text x="192.7" y="379.5" font-size="4.2" fill="#3c3038" font-weight="bold" text-anchor="start" class="t" >4</text>
<path d="M202.3 357.8 L202.3 362.8" fill="none" stroke="#1c1c1c" stroke-width="1.1"/>
<path d="M196.3 363.3 L202.3 375" fill="none" stroke="#1c1c1c" stroke-width="1.1"/>
<path d="M202.3 375 L202.3 380" fill="none" stroke="#1c1c1c" stroke-width="1.1"/>
<text x="203.8" y="362.5" font-size="4.2" fill="#3c3038" font-weight="bold" text-anchor="start" class="t" >5</text>
<text x="203.8" y="379.5" font-size="4.2" fill="#3c3038" font-weight="bold" text-anchor="start" class="t" >6</text>
<text x="166.3" y="371.4" font-size="4.1" fill="#3c3038" font-weight="bold" text-anchor="start" class="t" >K3</text>
<path d="M176.5 368.8H198.5" fill="none" stroke="#1c1c1c" stroke-width="1.1" stroke-dasharray="3.5 5 3.5 5"/>
<path d="M180.2 380 L180.2 397.5" fill="none" stroke="#a43232" stroke-width="1.3"/>
<path d="M202.3 380 L202.3 385.3 L197 385.3 L197 397.5" fill="none" stroke="#a43232" stroke-width="1.3"/>
<path d="M180 397.5 L180 402.2" fill="none" stroke="#1c1c1c" stroke-width="1.1"/>
<path d="M197 397.5 L197 402.2" fill="none" stroke="#1c1c1c" stroke-width="1.1"/>
<rect x="179.5" y="402.4" width="18" height="6.2" fill="#1c1c1c"/>
<path d="M179.5 409.9h18M179.5 411.5h18M179.5 413.1h18" stroke="#1c1c1c" stroke-width="0.8"/>
<rect x="179.5" y="414.1" width="18" height="6.3" fill="#1c1c1c"/>
<path d="M180 420.4 L180 425.5" fill="none" stroke="#1c1c1c" stroke-width="1.1"/>
<path d="M197 420.4 L197 425.5" fill="none" stroke="#1c1c1c" stroke-width="1.1"/>
<text x="166.8" y="409.4" font-size="4.1" fill="#3c3038" font-weight="bold" text-anchor="start" class="t" >T1</text>
<text x="181.5" y="401" font-size="3.8" fill="#3c3038" font-weight="bold" text-anchor="start" class="t" >1</text>
<text x="198.5" y="401" font-size="3.8" fill="#3c3038" font-weight="bold" text-anchor="start" class="t" >2</text>
<text x="181.5" y="425" font-size="3.8" fill="#3c3038" font-weight="bold" text-anchor="start" class="t" >3</text>
<text x="198.5" y="425" font-size="3.8" fill="#3c3038" font-weight="bold" text-anchor="start" class="t" >4</text>
<path d="M180 425.5 L174.2 425.5 L174.2 453.75" fill="none" stroke="#3c3cff" stroke-width="1.3"/>
<path d="M197 425.5 L208.3 425.5 L208.3 453.75" fill="none" stroke="#3c3cff" stroke-width="1.3"/>
<path d="M174.2 453.75 L180.4 453.75" fill="none" stroke="#333" stroke-width="1.1"/>
<path d="M208.3 453.75 L201.7 453.75" fill="none" stroke="#333" stroke-width="1.1"/>
<path d="M191.25 442.9L201.7 453.75L191.25 465L180.4 453.75Z" fill="none" stroke="#444" stroke-width="1.2"/>
<path d="M185 453.75h12.5" stroke="#333" stroke-width="0.8" stroke-dasharray="1.5 1"/>
<path d="M188 450.5v6.5l5-3.25z" fill="#1c1c1c"/><path d="M193.5 450.5v6.5" stroke="#1c1c1c" stroke-width="1.2"/>
<path d="M191.25 442.9 L191.25 436.7" fill="none" stroke="#333" stroke-width="1.1"/>
<path d="M191.25 465 L191.25 470" fill="none" stroke="#333" stroke-width="1.1"/>
<path d="M191.25 436.7 L180 436.7 L180 482" fill="none" stroke="#ff3030" stroke-width="1.4"/>
<path d="M191.25 470 L202.5 470 L202.5 482" fill="none" stroke="#ff3030" stroke-width="1.4"/>
<path d="M191.25 470 L191.25 482" fill="none" stroke="#ff3030" stroke-width="1.4"/>
<circle cx="180" cy="453.75" r="1.4" fill="#7a0000"/>
<path d="M180.2 482 L180.2 487" fill="none" stroke="#1c1c1c" stroke-width="1.1"/>
<path d="M174.2 487.5 L180.2 499" fill="none" stroke="#1c1c1c" stroke-width="1.1"/>
<path d="M180.2 499 L180.2 504.5" fill="none" stroke="#1c1c1c" stroke-width="1.1"/>
<text x="181.7" y="486.5" font-size="4.2" fill="#3c3038" font-weight="bold" text-anchor="start" class="t" >1</text>
<text x="181.7" y="504.5" font-size="4.2" fill="#3c3038" font-weight="bold" text-anchor="start" class="t" >2</text>
<path d="M191.2 482 L191.2 487" fill="none" stroke="#1c1c1c" stroke-width="1.1"/>
<path d="M185.2 487.5 L191.2 499" fill="none" stroke="#1c1c1c" stroke-width="1.1"/>
<path d="M191.2 499 L191.2 504.5" fill="none" stroke="#1c1c1c" stroke-width="1.1"/>
<text x="192.7" y="486.5" font-size="4.2" fill="#3c3038" font-weight="bold" text-anchor="start" class="t" >3</text>
<text x="192.7" y="504.5" font-size="4.2" fill="#3c3038" font-weight="bold" text-anchor="start" class="t" >4</text>
<path d="M202.3 482 L202.3 487" fill="none" stroke="#1c1c1c" stroke-width="1.1"/>
<path d="M196.3 487.5 L202.3 499" fill="none" stroke="#1c1c1c" stroke-width="1.1"/>
<path d="M202.3 499 L202.3 504.5" fill="none" stroke="#1c1c1c" stroke-width="1.1"/>
<text x="203.8" y="486.5" font-size="4.2" fill="#3c3038" font-weight="bold" text-anchor="start" class="t" >5</text>
<text x="203.8" y="504.5" font-size="4.2" fill="#3c3038" font-weight="bold" text-anchor="start" class="t" >6</text>
<text x="166.3" y="494.9" font-size="4.1" fill="#3c3038" font-weight="bold" text-anchor="start" class="t" >K2</text>
<path d="M176.5 493H198.5" fill="none" stroke="#1c1c1c" stroke-width="1.1" stroke-dasharray="3.5 5 3.5 5"/>
<path d="M180.2 504.5 L180.2 516.2 L66.3 516.2" fill="none" stroke="#ff3030" stroke-width="1.3"/>
<path d="M191.2 504.5 L191.2 527.4 L77.7 527.4" fill="none" stroke="#ff3030" stroke-width="1.3"/>
<path d="M202.3 504.5 L202.3 538.3 L89.3 538.3" fill="none" stroke="#ff3030" stroke-width="1.3"/>
<circle cx="66.3" cy="516.2" r="1.25" fill="#a00000"/>
<circle cx="77.7" cy="527.4" r="1.25" fill="#a00000"/>
<circle cx="89.3" cy="538.3" r="1.25" fill="#a00000"/>
<circle cx="241.6" cy="255.5" r="1.8" fill="#fff" stroke="#1c1c1c" stroke-width="1.1"/>
<path d="M236 255.5 L239.8 255.5" fill="none" stroke="#1c1c1c" stroke-width="1"/>
<path d="M243.4 255.5 L247 255.5" fill="none" stroke="#1c1c1c" stroke-width="1"/>
<text x="239.5" y="262" font-size="4.3" fill="#6a6aa0" font-weight="bold" text-anchor="start" class="t" >X1</text>
<path d="M247 255.6 L258.8 255.6" fill="none" stroke="#3c3cff" stroke-width="1.3"/>
<path d="M258.8 255.6 L264.2 255.6" fill="none" stroke="#1c1c1c" stroke-width="1.1"/>
<text x="260" y="253" font-size="3.8" fill="#3c3038" font-weight="bold" text-anchor="start" class="t" >1</text>
<path d="M264.6 261.6 L275 255.4 L281.3 255.4" fill="none" stroke="#1c1c1c" stroke-width="1.1"/>
<rect x="281.3" y="249.6" width="12.4" height="12" rx="1" fill="none" stroke="#1c1c1c" stroke-width="1.2"/>
<path d="M287.5 249.6v12M283.5 258.5v-5.5h2.5v5.5M289 253h3" fill="none" stroke="#1c1c1c" stroke-width="0.9"/>
<path d="M284.5 261.6v2M289.5 261.6v2" fill="none" stroke="#1c1c1c" stroke-width="0.9"/>
<path d="M293.7 255.6 L295 255.6" fill="none" stroke="#1c1c1c" stroke-width="1.1"/>
<text x="295" y="253.5" font-size="3.8" fill="#3c3038" font-weight="bold" text-anchor="start" class="t" >2</text>
<path d="M270.2 259.5 L270.2 274" fill="none" stroke="#1c1c1c" stroke-width="1.1"/>
<path d="M266.5 274 L274 274" fill="none" stroke="#1c1c1c" stroke-width="1.2"/>
<rect x="266.8" y="263.3" width="7.6" height="7" fill="none" stroke="#1c1c1c" stroke-width="1.1"/>
<path d="M266.8 266.8h7.6" stroke="#1c1c1c" stroke-width="1"/>
<path d="M277.5 266.6h13" fill="none" stroke="#1c1c1c" stroke-width="1" stroke-dasharray="1.5 2"/>
<text x="271.5" y="287.5" font-size="4.3" fill="#3c3038" font-weight="bold" text-anchor="start" class="t" transform="rotate(-90 271.5 287.5)">Q2</text>
<path d="M294 255.7 L434.9 255.7 L434.9 306.3" fill="none" stroke="#3c3cff" stroke-width="1.3"/>
<circle cx="321.4" cy="255.7" r="1.25" fill="#8a0000"/>
<path d="M321.4 255.7 L321.4 284" fill="none" stroke="#3c3cff" stroke-width="1.3"/>
<path d="M321.4 284 L321.4 290 L327.4 290" fill="none" stroke="#1c1c1c" stroke-width="1.1"/>
<path d="M327.9 289 L321.4 300" fill="none" stroke="#1c1c1c" stroke-width="1.1"/>
<path d="M321.4 300 L321.4 306" fill="none" stroke="#1c1c1c" stroke-width="1.1"/>
<path d="M327.5 293c3-1 4.5 2 2 4" fill="none" stroke="#1c1c1c" stroke-width="1"/>
<path d="M309.5 295.3h4.5M310.8 295.3v3.2M312.8 295.3v3.2M315.5 296h1.8M318.5 296h1.8" fill="none" stroke="#1c1c1c" stroke-width="1"/>
<text x="300.3" y="294.9" font-size="4.1" fill="#3c3038" font-weight="bold" text-anchor="start" class="t" >FT</text>
<text x="323.5" y="288.5" font-size="3.8" fill="#3c3038" font-weight="bold" text-anchor="start" class="t" >95</text>
<text x="323.5" y="306" font-size="3.8" fill="#3c3038" font-weight="bold" text-anchor="start" class="t" >96</text>
<path d="M321.4 306 L321.4 324" fill="none" stroke="#3c3cff" stroke-width="1.3"/>
<path d="M321.4 324 L321.4 330 L327.4 330" fill="none" stroke="#1c1c1c" stroke-width="1.1"/>
<path d="M327.9 329 L321.4 339.5" fill="none" stroke="#1c1c1c" stroke-width="1.1"/>
<path d="M321.4 339.5 L321.4 345.5" fill="none" stroke="#1c1c1c" stroke-width="1.1"/>
<path d="M309.8 332.5v5M309.8 335h3M314 335h5" fill="none" stroke="#1c1c1c" stroke-width="1"/>
<text x="300.3" y="334.9" font-size="4.1" fill="#3c3038" font-weight="bold" text-anchor="start" class="t" >S0</text>
<text x="323.5" y="328" font-size="3.8" fill="#3c3038" font-weight="bold" text-anchor="start" class="t" >1</text>
<text x="323.5" y="345" font-size="3.8" fill="#3c3038" font-weight="bold" text-anchor="start" class="t" >2</text>
<path d="M321.4 345.5 L321.4 357" fill="none" stroke="#3c3cff" stroke-width="1.3"/>
<path d="M321.4 357 L361.4 357 L361.4 374" fill="none" stroke="#3c3cff" stroke-width="1.3"/>
<circle cx="321.4" cy="357" r="1.25" fill="#8a0000"/>
<path d="M321.4 357 L321.4 374" fill="none" stroke="#3c3cff" stroke-width="1.3"/>
<path d="M321.4 374 L321.4 380" fill="none" stroke="#1c1c1c" stroke-width="1.1"/>
<path d="M315.7 380 L321.4 392" fill="none" stroke="#1c1c1c" stroke-width="1.1"/>
<path d="M321.4 392 L321.4 397" fill="none" stroke="#1c1c1c" stroke-width="1.1"/>
<path d="M310 381.5v5M310 384h3M313.5 384h3" fill="none" stroke="#1c1c1c" stroke-width="1"/>
<text x="300.8" y="384.9" font-size="4.1" fill="#3c3038" font-weight="bold" text-anchor="start" class="t" >S1</text>
<text x="323.5" y="378" font-size="3.8" fill="#3c3038" font-weight="bold" text-anchor="start" class="t" >3</text>
<text x="323.5" y="396" font-size="3.8" fill="#3c3038" font-weight="bold" text-anchor="start" class="t" >4</text>
<path d="M361.4 374 L361.4 380" fill="none" stroke="#1c1c1c" stroke-width="1.1"/>
<path d="M355.7 380 L361.4 392" fill="none" stroke="#1c1c1c" stroke-width="1.1"/>
<path d="M361.4 392 L361.4 397" fill="none" stroke="#1c1c1c" stroke-width="1.1"/>
<text x="346.3" y="384.9" font-size="4.1" fill="#3c3038" font-weight="bold" text-anchor="start" class="t" >K1</text>
<text x="363.5" y="378" font-size="3.8" fill="#3c3038" font-weight="bold" text-anchor="start" class="t" >13</text>
<text x="363.5" y="396" font-size="3.8" fill="#3c3038" font-weight="bold" text-anchor="start" class="t" >14</text>
<path d="M321.4 397 L321.4 425" fill="none" stroke="#3c3cff" stroke-width="1.3"/>
<path d="M361.4 397 L361.4 413.6 L321.4 413.6" fill="none" stroke="#3c3cff" stroke-width="1.3"/>
<circle cx="321.4" cy="413.6" r="1.25" fill="#8a0000"/>
<path d="M321.4 425 L321.4 431.5 L327.4 431.5" fill="none" stroke="#1c1c1c" stroke-width="1.1"/>
<path d="M327.9 430.5 L321.4 441.0" fill="none" stroke="#1c1c1c" stroke-width="1.1"/>
<path d="M321.4 441.0 L321.4 447.0" fill="none" stroke="#1c1c1c" stroke-width="1.1"/>
<text x="307.3" y="435.9" font-size="4.1" fill="#3c3038" font-weight="bold" text-anchor="start" class="t" >K2</text>
<text x="323.5" y="429.5" font-size="3.8" fill="#3c3038" font-weight="bold" text-anchor="start" class="t" >11</text>
<text x="323.5" y="446.5" font-size="3.8" fill="#3c3038" font-weight="bold" text-anchor="start" class="t" >12</text>
<path d="M321.4 447 L321.4 471" fill="none" stroke="#3c3cff" stroke-width="1.3"/>
<path d="M321.4 471 L321.4 477 L327.4 477" fill="none" stroke="#1c1c1c" stroke-width="1.1"/>
<path d="M327.9 476 L321.4 487" fill="none" stroke="#1c1c1c" stroke-width="1.1"/>
<path d="M321.4 487 L321.4 493" fill="none" stroke="#1c1c1c" stroke-width="1.1"/>
<text x="307.3" y="481.9" font-size="4.1" fill="#3c3038" font-weight="bold" text-anchor="start" class="t" >K3</text>
<text x="323.5" y="475.5" font-size="3.8" fill="#3c3038" font-weight="bold" text-anchor="start" class="t" >11</text>
<text x="323.5" y="492.5" font-size="3.8" fill="#3c3038" font-weight="bold" text-anchor="start" class="t" >12</text>
<path d="M321.4 493 L321.4 516" fill="none" stroke="#3c3cff" stroke-width="1.3"/>
<path d="M321.4 516 L321.4 523" fill="none" stroke="#1c1c1c" stroke-width="1.1"/>
<rect x="313.59999999999997" y="523.4" width="15.6" height="7.8" fill="#fff" stroke="#1c1c1c" stroke-width="1.2"/>
<path d="M321.4 531.2 L321.4 537" fill="none" stroke="#1c1c1c" stroke-width="1.1"/>
<text x="302.8" y="528.4" font-size="4.1" fill="#3c3038" font-weight="bold" text-anchor="start" class="t" >K1</text>
<text x="323.5" y="520.5" font-size="3.8" fill="#3c3038" font-weight="bold" text-anchor="start" class="t" >A1</text>
<text x="323.5" y="537.5" font-size="3.8" fill="#3c3038" font-weight="bold" text-anchor="start" class="t" >A2</text>
<path d="M321.4 537 L321.4 561.5" fill="none" stroke="#3c3cff" stroke-width="1.3"/>
<circle cx="258.6" cy="561.5" r="1.5" fill="#fff" stroke="#1c1c1c" stroke-width="1.1"/>
<path d="M260.1 561.5 L264 561.5" fill="none" stroke="#1c1c1c" stroke-width="1"/>
<text x="252" y="563.5" font-size="4.6" fill="#2a2030" font-weight="bold" text-anchor="start" class="t" >2</text>
<text x="256.5" y="569.5" font-size="4" fill="#6a6aa0" font-weight="bold" text-anchor="start" class="t" >X1</text>
<path d="M264 561.5 L571 561.5 L571 537.7" fill="none" stroke="#3c3cff" stroke-width="1.3"/>
<circle cx="321.4" cy="561.5" r="1.25" fill="#8a0000"/>
<path d="M434.9 306.3 L525.6 306.3 L525.6 329" fill="none" stroke="#3c3cff" stroke-width="1.3"/>
<circle cx="434.9" cy="306.3" r="1.25" fill="#8a0000"/>
<circle cx="479.5" cy="306.3" r="1.25" fill="#8a0000"/>
<path d="M434.9 306.3 L434.9 329" fill="none" stroke="#3c3cff" stroke-width="1.3"/>
<path d="M479.5 306.3 L479.5 329" fill="none" stroke="#3c3cff" stroke-width="1.3"/>
<path d="M434.9 329 L434.9 334.5" fill="none" stroke="#1c1c1c" stroke-width="1.1"/>
<path d="M428.9 334.5 L434.9 346.5" fill="none" stroke="#1c1c1c" stroke-width="1.1"/>
<path d="M434.9 346.5 L434.9 352.0" fill="none" stroke="#1c1c1c" stroke-width="1.1"/>
<text x="436.9" y="334" font-size="3.8" fill="#3c3038" font-weight="bold" text-anchor="start" class="t" >13</text>
<text x="436.9" y="351" font-size="3.8" fill="#3c3038" font-weight="bold" text-anchor="start" class="t" >14</text>
<path d="M479.5 329 L479.5 334.5" fill="none" stroke="#1c1c1c" stroke-width="1.1"/>
<path d="M473.5 334.5 L479.5 346.5" fill="none" stroke="#1c1c1c" stroke-width="1.1"/>
<path d="M479.5 346.5 L479.5 352.0" fill="none" stroke="#1c1c1c" stroke-width="1.1"/>
<text x="481.5" y="334" font-size="3.8" fill="#3c3038" font-weight="bold" text-anchor="start" class="t" >23</text>
<text x="481.5" y="351" font-size="3.8" fill="#3c3038" font-weight="bold" text-anchor="start" class="t" >24</text>
<path d="M525.6 329 L525.6 334.5" fill="none" stroke="#1c1c1c" stroke-width="1.1"/>
<path d="M519.6 334.5 L525.6 346.5" fill="none" stroke="#1c1c1c" stroke-width="1.1"/>
<path d="M525.6 346.5 L525.6 352.0" fill="none" stroke="#1c1c1c" stroke-width="1.1"/>
<text x="527.6" y="334" font-size="3.8" fill="#3c3038" font-weight="bold" text-anchor="start" class="t" >33</text>
<text x="527.6" y="351" font-size="3.8" fill="#3c3038" font-weight="bold" text-anchor="start" class="t" >34</text>
<text x="414.3" y="341.9" font-size="4.1" fill="#3c3038" font-weight="bold" text-anchor="start" class="t" >S0</text>
<path d="M424.5 338v5M424.5 340.5h3M428 340.5h3" fill="none" stroke="#1c1c1c" stroke-width="1"/>
<text x="465.3" y="341.9" font-size="4.1" fill="#3c3038" font-weight="bold" text-anchor="start" class="t" >K2</text>
<text x="511.8" y="341.9" font-size="4.1" fill="#3c3038" font-weight="bold" text-anchor="start" class="t" >K3</text>
<path d="M434.9 352 L434.9 437.3" fill="none" stroke="#3c3cff" stroke-width="1.3"/>
<path d="M479.5 352 L479.5 374.3 L434.9 374.3" fill="none" stroke="#3c3cff" stroke-width="1.3"/>
<circle cx="434.9" cy="374.3" r="1.25" fill="#8a0000"/>
<path d="M525.6 352 L525.6 493.3" fill="none" stroke="#3c3cff" stroke-width="1.3"/>
<path d="M434.9 437.3 L434.9 443.0 L440.4 443.0" fill="none" stroke="#1c1c1c" stroke-width="1.1"/>
<path d="M440.9 442.0 L434.9 453.0" fill="none" stroke="#1c1c1c" stroke-width="1.1"/>
<path d="M434.9 453.0 L434.9 458.0" fill="none" stroke="#1c1c1c" stroke-width="1.1"/>
<text x="420.3" y="447.4" font-size="4.1" fill="#3c3038" font-weight="bold" text-anchor="start" class="t" >K1</text>
<text x="437" y="441.5" font-size="3.8" fill="#3c3038" font-weight="bold" text-anchor="start" class="t" >21</text>
<text x="437" y="457.5" font-size="3.8" fill="#3c3038" font-weight="bold" text-anchor="start" class="t" >22</text>
<path d="M434.9 458 L434.9 477" fill="none" stroke="#3c3cff" stroke-width="1.3"/>
<path d="M434.9 477 L434.9 483 L440.4 483" fill="none" stroke="#1c1c1c" stroke-width="1.1"/>
<path d="M440.9 482 L434.9 493" fill="none" stroke="#1c1c1c" stroke-width="1.1"/>
<path d="M434.9 493 L434.9 498" fill="none" stroke="#1c1c1c" stroke-width="1.1"/>
<path d="M426.5 485l-2.6 2.8 2.6 2.8M424 487.8h2.5M428.5 487.8h1.8M431.5 487.8h1.8" fill="none" stroke="#1c1c1c" stroke-width="1"/>
<text x="412.3" y="488.4" font-size="4.1" fill="#3c3038" font-weight="bold" text-anchor="start" class="t" >D1</text>
<text x="437" y="481.5" font-size="3.8" fill="#3c3038" font-weight="bold" text-anchor="start" class="t" >15</text>
<text x="437" y="497.5" font-size="3.8" fill="#3c3038" font-weight="bold" text-anchor="start" class="t" >16</text>
<path d="M434.9 498 L434.9 516.7" fill="none" stroke="#3c3cff" stroke-width="1.3"/>
<path d="M434.9 516.7 L434.9 523.7" fill="none" stroke="#1c1c1c" stroke-width="1.1"/>
<rect x="427.09999999999997" y="524.1" width="15.6" height="7.8" fill="#fff" stroke="#1c1c1c" stroke-width="1.2"/>
<path d="M434.9 531.9000000000001 L434.9 537.7" fill="none" stroke="#1c1c1c" stroke-width="1.1"/>
<text x="416.3" y="528.9" font-size="4.1" fill="#3c3038" font-weight="bold" text-anchor="start" class="t" >K2</text>
<text x="437" y="521" font-size="3.8" fill="#3c3038" font-weight="bold" text-anchor="start" class="t" >A1</text>
<text x="437" y="538" font-size="3.8" fill="#3c3038" font-weight="bold" text-anchor="start" class="t" >A2</text>
<path d="M434.9 537.7 L434.9 561.5" fill="none" stroke="#3c3cff" stroke-width="1.3"/>
<circle cx="434.9" cy="561.5" r="1.25" fill="#8a0000"/>
<path d="M525.6 493.3 L571 493.3 L571 516.7" fill="none" stroke="#3c3cff" stroke-width="1.3"/>
<circle cx="525.6" cy="493.3" r="1.25" fill="#8a0000"/>
<path d="M525.6 493.3 L525.6 516.7" fill="none" stroke="#3c3cff" stroke-width="1.3"/>
<path d="M525.6 516.7 L525.6 523.7" fill="none" stroke="#1c1c1c" stroke-width="1.1"/>
<rect x="517.8000000000001" y="524.1" width="15.6" height="7.8" fill="#fff" stroke="#1c1c1c" stroke-width="1.2"/>
<path d="M525.6 531.9000000000001 L525.6 537.7" fill="none" stroke="#1c1c1c" stroke-width="1.1"/>
<text x="507.3" y="528.9" font-size="4.1" fill="#3c3038" font-weight="bold" text-anchor="start" class="t" >K3</text>
<text x="527.5" y="521" font-size="3.8" fill="#3c3038" font-weight="bold" text-anchor="start" class="t" >A1</text>
<text x="527.5" y="538" font-size="3.8" fill="#3c3038" font-weight="bold" text-anchor="start" class="t" >A2</text>
<path d="M525.6 537.7 L525.6 561.5" fill="none" stroke="#3c3cff" stroke-width="1.3"/>
<circle cx="525.6" cy="561.5" r="1.25" fill="#8a0000"/>
<path d="M571 516.7 L571 523.7" fill="none" stroke="#1c1c1c" stroke-width="1.1"/>
<rect x="563.2" y="524" width="15.6" height="7.8" fill="#fff" stroke="#1c1c1c" stroke-width="1.2"/>
<path d="M563.2 524h6v7.8h-6z" fill="#222" stroke="#1c1c1c" stroke-width="1"/><path d="M564 525l4.5 6M568.5 525l-4.5 6" fill="none" stroke="#fff" stroke-width="0.8"/>
<path d="M571 531.8 L571 537.7" fill="none" stroke="#1c1c1c" stroke-width="1.1"/>
<text x="552.3" y="528.9" font-size="4.1" fill="#3c3038" font-weight="bold" text-anchor="start" class="t" >D1</text>
<text x="573" y="521" font-size="3.8" fill="#3c3038" font-weight="bold" text-anchor="start" class="t" >A1</text>
<text x="573" y="538" font-size="3.8" fill="#3c3038" font-weight="bold" text-anchor="start" class="t" >A2</text>

</g>
</svg>
<div class="a" style="left:553px;top:651.4px;font-size:11.5px;color:#1a1a30;transform:scaleX(0.93);transform-origin:0 0;white-space:nowrap;-webkit-text-stroke:0.15px #1a1a30">Edição</div>
</body></html>
